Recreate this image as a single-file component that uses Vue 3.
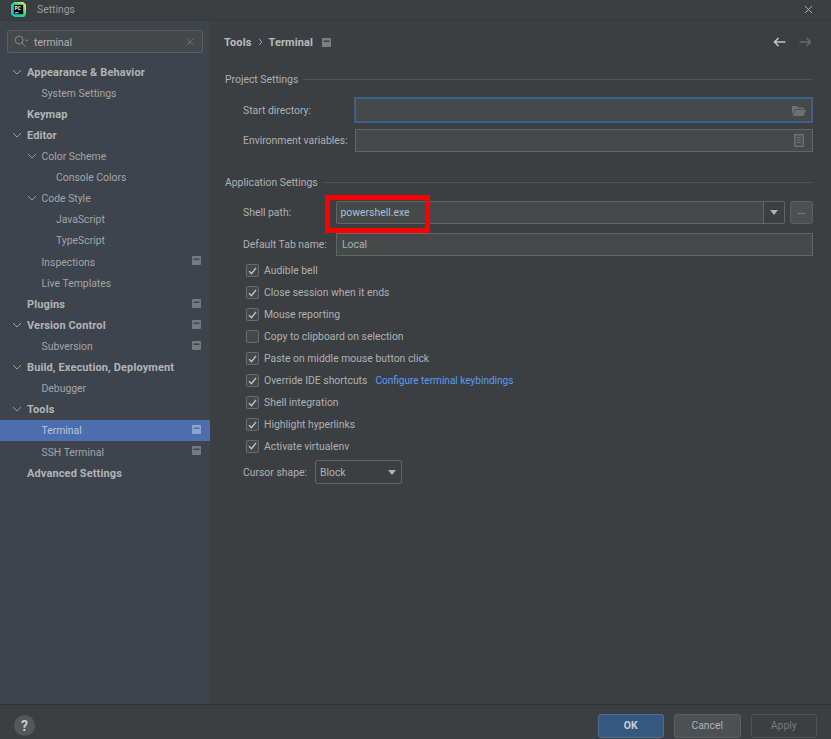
<template>
  <div class="dialog">
    <header class="titlebar">
      <svg class="logo" viewBox="0 0 16 16">
        <defs>
          <linearGradient id="pc" x1="0" y1="1" x2="1" y2="0">
            <stop offset="0" stop-color="#07c3f2" />
            <stop offset="0.5" stop-color="#21d789" />
            <stop offset="1" stop-color="#fcf84a" />
          </linearGradient>
        </defs>
        <path d="M3 0h10l3 3v10l-2 3H4l-4-3V3z" fill="url(#pc)" />
        <rect x="3" y="3" width="10" height="10" fill="#000" />
        <rect x="4.2" y="11" width="4" height="1" fill="#fff" />
        <text x="4" y="8" class="logo-text">PC</text>
      </svg>
      <span class="title">Settings</span>
      <svg class="close" viewBox="0 0 10 10"><path d="M1 1l8 8M9 1l-8 8" /></svg>
    </header>

    <div class="body">
      <aside class="sidebar">
        <div class="search">
          <svg class="search-icon" viewBox="0 0 16 14">
            <circle cx="5.5" cy="5.5" r="4.2" />
            <path d="M8.6 8.6l3.4 3.6" />
            <path class="fill" d="M12 5h3.4l-1.7 2z" />
          </svg>
          <span class="search-text">terminal</span>
          <svg class="search-clear" viewBox="0 0 10 10"><path d="M1 1l8 8M9 1l-8 8" /></svg>
        </div>
        <ul class="tree">
          <li
            v-for="item in tree"
            :key="item.label"
            class="tree-row"
            :class="{ selected: item.selected }"
            :style="{ paddingLeft: 27 + item.level * 14.5 + 'px' }"
          >
            <svg
              v-if="item.open"
              class="chevron"
              viewBox="0 0 10 6"
              :style="{ left: 12 + item.level * 14.5 + 'px' }"
            >
              <path d="M1 1l4 4 4-4" />
            </svg>
            <span :class="{ bold: item.level === 0 }">{{ item.label }}</span>
            <svg v-if="item.badge" class="badge side-badge" viewBox="0 0 9 9">
              <rect width="9" height="9" rx="1" />
              <rect class="badge-line" x="1.5" y="2.5" width="6" height="1.5" />
            </svg>
          </li>
        </ul>
      </aside>

      <main class="content">
        <div class="crumbs">
          <span class="crumb">Tools</span>
          <svg class="crumb-sep" viewBox="0 0 5 8"><path d="M1 1l3 3-3 3" /></svg>
          <span class="crumb">Terminal</span>
          <svg class="badge crumb-badge" viewBox="0 0 9 9">
            <rect width="9" height="9" rx="1" />
            <rect class="badge-line" x="1.5" y="2.5" width="6" height="1.5" />
          </svg>
          <svg class="arrow back" viewBox="0 0 13 10"><path d="M12.5 5H1.5M5.5 1l-4 4 4 4" /></svg>
          <svg class="arrow forward" viewBox="0 0 13 10"><path d="M.5 5h11M7.5 1l4 4-4 4" /></svg>
        </div>

        <div class="group-head"><span>Project Settings</span><i></i></div>
        <div class="form-row first">
          <label class="label wide">Start directory:</label>
          <div class="input focused">
            <svg class="folder" viewBox="0 0 14 11">
              <path d="M0 1h5l1 1.5h6V4H3L0 9.5z" />
              <path d="M3.4 4.8H14L11.6 11H0.6z" />
            </svg>
          </div>
        </div>
        <div class="form-row env">
          <label class="label wide">Environment variables:</label>
          <div class="input">
            <svg class="doc" viewBox="0 0 10 13">
              <path d="M0 0h10v13H0zM1.5 1.5v10h7v-10zM2.5 3h5v1.2h-5zM2.5 5.5h5v1.2h-5zM2.5 8h5v1.2h-5z" fill-rule="evenodd" />
            </svg>
          </div>
        </div>

        <div class="group-head app"><span>Application Settings</span><i></i></div>
        <div class="form-row shell">
          <label class="label narrow">Shell path:</label>
          <div class="combo">
            <span class="combo-text">powershell.exe</span>
            <span class="combo-btn"><b class="tri"></b></span>
            <span class="highlight"></span>
          </div>
          <button class="dots">...</button>
        </div>
        <div class="form-row tabname">
          <label class="label narrow">Default Tab name:</label>
          <div class="input text">Local</div>
        </div>

        <div class="checks">
          <div v-for="c in checks" :key="c.label" class="check-row">
            <span class="box">
              <svg v-if="c.on" viewBox="0 0 10 9"><path d="M1 4.6l2.8 3L9 1" /></svg>
            </span>
            <span>{{ c.label }}</span>
            <a v-if="c.link" class="link">{{ c.link }}</a>
          </div>
        </div>

        <div class="cursor">
          <label class="cursor-label">Cursor shape:</label>
          <div class="select">Block<b class="tri"></b></div>
        </div>
      </main>
    </div>

    <footer class="footer">
      <span class="help">?</span>
      <button class="btn primary">OK</button>
      <button class="btn">Cancel</button>
      <button class="btn disabled">Apply</button>
    </footer>
  </div>
</template>

<script setup>
const tree = [
  { label: 'Appearance & Behavior', level: 0, open: true },
  { label: 'System Settings', level: 1 },
  { label: 'Keymap', level: 0 },
  { label: 'Editor', level: 0, open: true },
  { label: 'Color Scheme', level: 1, open: true },
  { label: 'Console Colors', level: 2 },
  { label: 'Code Style', level: 1, open: true },
  { label: 'JavaScript', level: 2 },
  { label: 'TypeScript', level: 2 },
  { label: 'Inspections', level: 1, badge: true },
  { label: 'Live Templates', level: 1 },
  { label: 'Plugins', level: 0, badge: true },
  { label: 'Version Control', level: 0, open: true, badge: true },
  { label: 'Subversion', level: 1, badge: true },
  { label: 'Build, Execution, Deployment', level: 0, open: true },
  { label: 'Debugger', level: 1 },
  { label: 'Tools', level: 0, open: true },
  { label: 'Terminal', level: 1, badge: true, selected: true },
  { label: 'SSH Terminal', level: 1, badge: true },
  { label: 'Advanced Settings', level: 0 }
]

const checks = [
  { label: 'Audible bell', on: true },
  { label: 'Close session when it ends', on: true },
  { label: 'Mouse reporting', on: true },
  { label: 'Copy to clipboard on selection', on: false },
  { label: 'Paste on middle mouse button click', on: true },
  { label: 'Override IDE shortcuts', on: true, link: 'Configure terminal keybindings' },
  { label: 'Shell integration', on: true },
  { label: 'Highlight hyperlinks', on: true },
  { label: 'Activate virtualenv', on: true }
]
</script>

<style>
html,
body {
  margin: 0;
  background: #3c3f41;
}
</style>

<style scoped>
.dialog {
  width: 831px;
  height: 739px;
  display: flex;
  flex-direction: column;
  overflow: hidden;
  background: #3c3f41;
  color: #aeb1b3;
  font-family: Roboto, "Noto Sans", sans-serif;
  font-size: 10.4px;
  white-space: nowrap;
}

.titlebar {
  flex: none;
  height: 21px;
  box-sizing: border-box;
  display: flex;
  align-items: center;
  padding: 0 18px 2px 11px;
  background: #3b3e40;
  border-bottom: 1px solid #36393b;
}

.logo {
  width: 15px;
  height: 15px;
}

.logo-text {
  font-size: 5px;
  font-weight: 700;
  fill: #fff;
}

.title {
  margin-left: 11px;
  color: #9a9d9f;
}

.close {
  width: 9px;
  height: 9px;
  margin-left: auto;
  fill: none;
  stroke: #b8babc;
  stroke-width: 1;
}

.body {
  flex: 1;
  min-height: 0;
  display: flex;
}

.sidebar {
  flex: none;
  width: 210px;
  box-sizing: border-box;
  padding-top: 9px;
  background: #3e434c;
}

.search {
  height: 23px;
  margin: 0 7px;
  box-sizing: border-box;
  display: flex;
  align-items: center;
  padding: 0 8px 0 6px;
  background: #45484a;
  border: 1px solid #5b5e60;
  border-radius: 2px;
}

.search-icon {
  width: 15px;
  height: 13px;
  fill: none;
  stroke: #8d9092;
  stroke-width: 1;
}

.search-icon .fill {
  fill: #8d9092;
  stroke: none;
}

.search-text {
  margin-left: 5px;
  padding-top: 1px;
  color: #b0b3b5;
}

.search-clear {
  width: 8px;
  height: 8px;
  margin-left: auto;
  fill: none;
  stroke: #6f7274;
  stroke-width: 1.2;
}

.tree {
  list-style: none;
  margin: 8.5px 0 0;
  padding: 0;
}

.tree-row {
  position: relative;
  height: 21.12px;
  box-sizing: border-box;
  display: flex;
  align-items: center;
  color: #a3a6a8;
}

.tree-row.selected {
  background: #4b6eaf;
  color: #bcc6d8;
}

.bold {
  font-size: 11px;
  font-weight: 700;
  letter-spacing: 0.12px;
  color: #b2b5b7;
}

.chevron {
  position: absolute;
  top: 7px;
  width: 10px;
  height: 6px;
  fill: none;
  stroke: #9a9d9f;
  stroke-width: 1;
}

.badge {
  width: 9px;
  height: 9px;
  fill: #767a7f;
}

.badge-line {
  fill: #3e434c;
}

.side-badge {
  position: absolute;
  right: 9px;
  top: 5px;
}

.selected .side-badge {
  fill: #8ea3cb;
}

.selected .badge-line {
  fill: #4b6eaf;
}

.content {
  flex: 1;
  min-width: 0;
  box-sizing: border-box;
  padding: 0 18px 0 14px;
}

.crumbs {
  height: 42px;
  display: flex;
  align-items: center;
  color: #b8bbbd;
}

.crumb {
  font-size: 11px;
  font-weight: 700;
  letter-spacing: 0.12px;
}

.crumb-sep {
  width: 5px;
  height: 8px;
  margin: 0 5px 0 7px;
  fill: none;
  stroke: #a0a3a5;
}

.crumb-badge {
  margin-left: 9px;
  fill: #7d8082;
}

.crumb-badge .badge-line {
  fill: #3c3f41;
}

.arrow {
  width: 13px;
  height: 10px;
  fill: none;
  stroke-width: 1.6;
}

.back {
  margin-left: auto;
  stroke: #c2c4c6;
}

.forward {
  margin-left: 13px;
  margin-right: 1px;
  stroke: #65686a;
}

.group-head {
  height: 16px;
  margin-top: 8px;
  display: flex;
  align-items: center;
  gap: 5px;
  padding-left: 1px;
}

.group-head i {
  flex: 1;
  height: 1px;
  background: #505355;
}

.group-head.app {
  margin-top: 22px;
}

.form-row {
  display: flex;
  align-items: center;
  padding-left: 19px;
}

.form-row.first {
  margin-top: 11px;
}

.form-row.env {
  margin-top: 7px;
}

.form-row.shell {
  margin-top: 11px;
}

.form-row.tabname {
  margin-top: 9px;
}

.label.wide {
  flex: none;
  width: 112px;
}

.label.narrow {
  flex: none;
  width: 93px;
}

.input {
  flex: 1;
  height: 23px;
  box-sizing: border-box;
  display: flex;
  align-items: center;
  justify-content: flex-end;
  padding: 0 6px;
  background: #45494a;
  border: 1px solid #646464;
}

.input.focused {
  height: 26px;
  margin: -1px 0 -1px -1px;
  border: 2px solid #3d6185;
  padding-right: 5px;
}

.input.text {
  justify-content: flex-start;
  padding: 0 5px;
}

.folder {
  width: 14px;
  height: 11px;
  fill: #6e7173;
}

.doc {
  width: 10px;
  height: 13px;
  margin-right: 2px;
  fill: #6e7173;
}

.combo {
  position: relative;
  flex: 1;
  height: 23px;
  box-sizing: border-box;
  display: flex;
  align-items: center;
  border: 1px solid #646464;
  border-radius: 2px;
  background: #45494a;
}

.combo-text {
  flex: 1;
  padding-left: 3.5px;
  color: #a9c0d6;
}

.combo-btn {
  flex: none;
  width: 20px;
  height: 100%;
  display: flex;
  align-items: center;
  justify-content: center;
  border-left: 1px solid #646464;
  background: #3c3f41;
}

.tri {
  width: 0;
  height: 0;
  border-left: 4.5px solid transparent;
  border-right: 4.5px solid transparent;
  border-top: 5px solid #afb1b3;
}

.highlight {
  position: absolute;
  left: -12px;
  top: -7px;
  width: 105px;
  height: 38px;
  box-sizing: border-box;
  border: 5px solid #fe0000;
}

.dots {
  flex: none;
  width: 23px;
  height: 23px;
  margin-left: 5px;
  padding: 0 0 3px;
  background: #4c5052;
  border: 1px solid #5e6060;
  border-radius: 3px;
  color: #aeb1b3;
  font: inherit;
  line-height: 1;
}

.checks {
  margin-top: 4px;
  padding-left: 22px;
}

.check-row {
  height: 21.95px;
  display: flex;
  align-items: center;
}

.box {
  flex: none;
  width: 13px;
  height: 13px;
  margin-right: 5px;
  box-sizing: border-box;
  display: flex;
  align-items: center;
  justify-content: center;
  background: #43494a;
  border: 1px solid #6b6b6b;
  border-radius: 2px;
}

.box svg {
  width: 9px;
  height: 8px;
  fill: none;
  stroke: #c5c7c9;
  stroke-width: 1.5;
}

.link {
  margin-left: 8px;
  font-size: 10.05px;
  color: #589df6;
}

.cursor {
  margin-top: 3px;
  padding-left: 19px;
  display: flex;
  align-items: center;
}

.cursor-label {
  flex: none;
  width: 72px;
}

.select {
  width: 87px;
  height: 24px;
  box-sizing: border-box;
  display: flex;
  align-items: center;
  justify-content: space-between;
  padding: 0 5px 0 4px;
  background: #3c3f41;
  border: 1px solid #646464;
  border-radius: 2px;
}

.footer {
  flex: none;
  height: 35px;
  box-sizing: border-box;
  display: flex;
  align-items: center;
  gap: 10px;
  padding: 7px 14px 0;
  border-top: 1px solid #323232;
  background: #3c3f41;
}

.help {
  width: 21px;
  height: 21px;
  margin-right: auto;
  border-radius: 50%;
  display: flex;
  align-items: center;
  justify-content: center;
  background: #55585a;
  color: #c8cacc;
  font-size: 14px;
  font-weight: 700;
}

.btn {
  width: 66.5px;
  height: 24px;
  padding: 0;
  background: #4c5052;
  border: 1px solid #5e6060;
  border-radius: 3px;
  color: #aeb1b3;
  font: inherit;
}

.btn.primary {
  background: #365880;
  border-color: #4c708c;
  color: #c6d0da;
  font-weight: 700;
}

.btn.disabled {
  background: #3c3f41;
  border-color: #505355;
  color: #77797b;
}
</style>
